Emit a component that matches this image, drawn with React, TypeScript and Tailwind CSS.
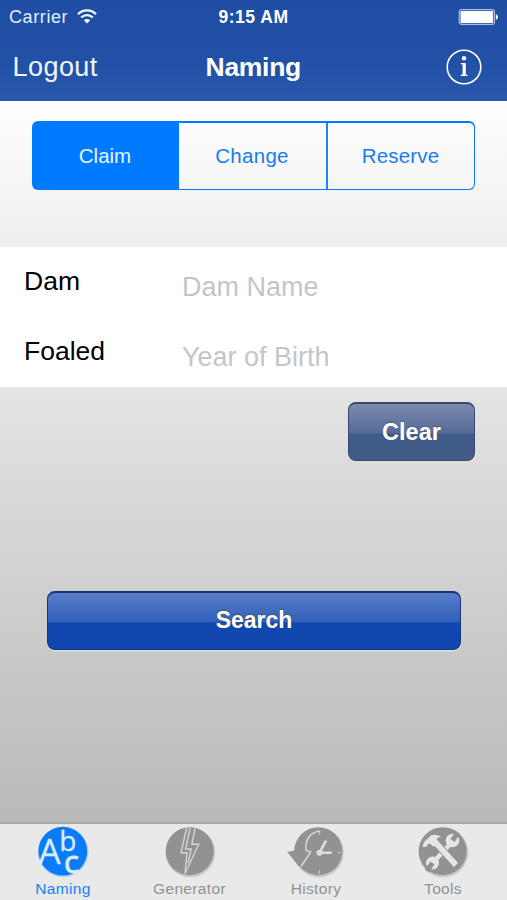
import type { ReactNode } from "react";

function StatusBar() {
  return (
    <div className="grid h-8 grid-cols-3 items-center pr-[9px] pl-[9px] text-[18px] leading-8 text-white">
      <div className="flex items-center gap-[9px]">
        <span className="pt-px tracking-[0.6px] text-[#e4efff]">Carrier</span>
        <svg width="20" height="15" viewBox="0 0 20 15" fill="none" stroke="#f4f8ff" strokeWidth="2.3">
          <path d="M1 5.2C6 .2 14 .2 19 5.2" />
          <path d="M4.2 8.5c3.3-3.1 8.3-3.1 11.6 0" />
          <path d="M6.8 11.2c1.8-1.7 4.6-1.7 6.4 0L10 14.5z" fill="#f4f8ff" stroke="none" />
        </svg>
      </div>
      <span className="pt-px text-center text-[17.5px] font-bold tracking-[0.5px] whitespace-nowrap">9:15 AM</span>
      <svg className="justify-self-end" width="40" height="16" viewBox="0 0 40 16">
        <rect x="1.2" y=".7" width="35.3" height="14.6" rx="2.5" fill="none" stroke="#a9bde2" strokeWidth="1.2" />
        <rect x="2.5" y="2" width="32.6" height="12" rx="1" fill="#fff" />
        <path d="M37.9 5.2c2.7.6 2.7 5 0 5.6z" fill="#fff" />
      </svg>
    </div>
  );
}

function Header() {
  return (
    <header className="h-[101px] shrink-0 bg-linear-to-b from-[#1f4da3] via-[#2151a6] via-60% to-[#2958ac]">
      <StatusBar />
      <div className="grid h-[69px] grid-cols-3 items-center pr-[25px] pl-[12.5px] text-[27px] text-white">
        <span className="pt-[2px] tracking-[0.45px] text-[#f1f6ff]">Logout</span>
        <span className="pt-[2px] pl-[12px] text-center text-[26.5px] font-bold tracking-[-0.3px]">Naming</span>
        <svg className="justify-self-end" width="36" height="36" viewBox="0 0 36 36">
          <circle cx="18" cy="18" r="16.8" fill="none" stroke="#fff" strokeWidth="1.6" />
          <circle cx="18" cy="9.3" r="2.2" fill="#fff" />
          <path d="M14.8 14h5v11.6l1.8.4v1h-7v-1l2-.4V15.4l-1.8-.3z" fill="#fff" />
        </svg>
      </div>
    </header>
  );
}

function Segments() {
  return (
    <section className="h-[146px] shrink-0 bg-linear-to-b from-white to-[#eeeeee] px-8 pt-[20px]">
      <div className="grid h-[69px] w-[443px] grid-cols-[145px_149px_1fr] overflow-hidden rounded-[6px] bg-[#007aff] p-[1.5px] text-[20.5px] text-[#167df0]">
        <button className="bg-[#007aff] pt-px pr-[2px] text-[#e2f7ff]">Claim</button>
        <button className="border-r-2 border-[#1f84f4] bg-linear-to-b from-[#fdfdfd] to-[#f5f5f5] pt-px tracking-[0.3px]">Change</button>
        <button className="rounded-r-[5px] bg-linear-to-b from-[#fdfdfd] to-[#f5f5f5] pt-px tracking-[0.2px]">Reserve</button>
      </div>
    </section>
  );
}

function Field({ label, hint }: { label: string; hint: string }) {
  return (
    <label className="flex h-[70px] items-center text-[27px]">
      <span className="w-[158px] text-[26.5px] text-black">{label}</span>
      <input
        className="mt-[10px] w-[290px] bg-transparent outline-none placeholder:text-[#c5c5c9]"
        placeholder={hint}
      />
    </label>
  );
}

function Tab({ label, active, children }: { label: string; active?: boolean; children: ReactNode }) {
  return (
    <div className={active ? "flex flex-col items-center text-[#1680f5]" : "flex flex-col items-center text-[#929292]"}>
      <svg className="overflow-visible" width="54" height="54" viewBox="0 0 54 54">
        {children}
      </svg>
      <span className="pt-px text-[15.5px] leading-[20px] tracking-[0.35px]">{label}</span>
    </div>
  );
}

function Disc() {
  return (
    <>
      <circle cx="27.5" cy="28.8" r="25" fill="#777" opacity=".14" />
      <circle cx="27.3" cy="28.2" r="24.5" fill="#777" opacity=".2" />
      <circle cx="26.7" cy="27.2" r="24" fill="#929292" />
    </>
  );
}

function TabBar() {
  return (
    <nav className="grid h-[78px] shrink-0 grid-cols-[126px_127px_126px_128px] border-t-2 border-[#a6a6a6] bg-[#e9e9e9]">
      <Tab label="Naming" active>
        <circle cx="27.2" cy="28" r="25.2" fill="#79b7f7" opacity=".5" />
        <circle cx="26.8" cy="27.2" r="24.4" fill="#0a7cf7" />
        <text fill="#d9ecff" stroke="#d9ecff" strokeWidth=".3" fontFamily="Open Sans, sans-serif">
          <tspan x="2.4" y="39.5" fontSize="35">A</tspan>
          <tspan x="23.2" y="26.5" fontSize="28">b</tspan>
          <tspan x="28" y="49" fontSize="31" strokeWidth="1">c</tspan>
        </text>
      </Tab>
      <Tab label="Generator">
        <Disc />
        <path
          d="M23.6 4 18 28.8h6L22 49.5 35.8 20.2h-7L32 4.5M27 4l-4.4 21h5.6L25 39"
          fill="none"
          stroke="#d4d4d4"
          strokeWidth="1.4"
        />
      </Tab>
      <Tab label="History">
        <g transform="translate(2.6 0)">
          <Disc />
        </g>
        <path d="M-1.8 28 7 26l5 15.5-2 1z" fill="#929292" />
        <path d="M31 7C20 8.5 16 17 17 26.5l4.8 1.5L12 42.5" fill="none" stroke="#d6d6d6" strokeWidth="1.5" />
        <path d="m37 16.5-6.5 12.3h12.2" fill="none" stroke="#dedede" strokeWidth="2.6" />
        <circle cx="30.5" cy="28.8" r="3" fill="#dedede" />
        <path d="M30.5 7v4M30.5 46v4M52 28.5h-3" stroke="#c4c4c4" strokeWidth="1.3" />
      </Tab>
      <Tab label="Tools">
        <Disc />
        <path d="M17 38.5 36 18" stroke="#e6e6e6" strokeWidth="4.5" />
        <circle cx="36.5" cy="16.5" r="6.8" fill="#e6e6e6" />
        <circle cx="16.5" cy="39" r="6.5" fill="#e6e6e6" />
        <path d="m36.5 16.5 5.5-8M16.5 39 11 47" stroke="#929292" strokeWidth="5" />
        <path d="m19 18 21 23" stroke="#929292" strokeWidth="7.5" />
        <path d="m19 18 21 23" stroke="#e6e6e6" strokeWidth="5.6" />
        <path d="m6.5 23 1.5-5 7-6.5c3-1.5 7-1 10 1.5l-4.5 1.2 2.2 3.8-5 5-3.7-3.2c-2-.2-3 1-3.2 3z" fill="#e6e6e6" />
      </Tab>
    </nav>
  );
}

export default function App() {
  return (
    <main className="flex h-[900px] w-[507px] flex-col overflow-hidden bg-white font-['Liberation_Sans',Arial,sans-serif]">
      <Header />
      <Segments />
      <section className="h-[140px] shrink-0 bg-white pl-[24px]">
        <Field label="Dam" hint="Dam Name" />
        <Field label="Foaled" hint="Year of Birth" />
      </section>
      <section className="flex h-[435px] flex-col bg-linear-to-b from-[#e4e4e4] to-[#b9b9b9] pt-[15px] font-bold text-white">
        <button className="mr-8 h-[59px] w-[127px] self-end rounded-[8px] border border-t-2 border-[#3a4869] bg-[linear-gradient(#7c8bad,#566b98_52%,#405b88_53%,#415b85)] pt-px text-[23.5px] [text-shadow:0_-1px_1px_#536078]">
          Clear
        </button>
        <button className="mt-[130px] ml-[47px] h-[59px] w-[414px] rounded-[8px] border border-t-2 border-[#173575] bg-[linear-gradient(#567dc8,#315fb9_52%,#1247af_53%,#1046af)] pb-px text-[23px] shadow-[0_1px_1px_#e2e8ef] [text-shadow:0_-1px_1px_#555]">
          Search
        </button>
      </section>
      <TabBar />
    </main>
  );
}
